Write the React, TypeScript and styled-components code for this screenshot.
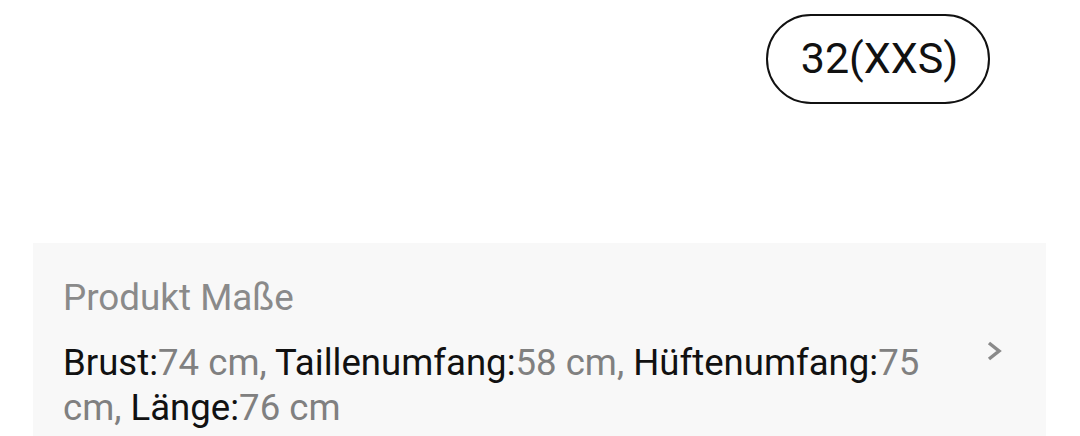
import React from "react";
import styled, { createGlobalStyle } from "styled-components";

const Global = createGlobalStyle`
  html, body { margin: 0; padding: 0; background: #ffffff; }
  body { font-family: Roboto, "Noto Sans", Arial, sans-serif; }
`;

const Page = styled.div`
  width: 1080px;
  height: 436px;
  display: flex;
  flex-direction: column;
  background: #ffffff;
  overflow: hidden;
`;

const SizeRow = styled.div`
  display: flex;
  justify-content: flex-end;
  padding: 14px 90px 0 0;
  height: 243px;
  box-sizing: border-box;
  flex-shrink: 0;
`;

const SizeChip = styled.div`
  width: 224px;
  height: 90px;
  box-sizing: border-box;
  border: 2.5px solid #111111;
  border-radius: 45px;
  display: flex;
  align-items: center;
  justify-content: center;
  font-size: 43px;
  color: #111111;
  padding: 0 0 2px 3px;
`;

const Panel = styled.div`
  margin: 0 34px 0 33px;
  flex: 1;
  background: #f8f8f8;
  display: flex;
  align-items: flex-start;
  padding: 34px 0 0 30px;
`;

const Body = styled.div`
  display: flex;
  flex-direction: column;
  width: 885px;
`;

const Title = styled.div`
  font-size: 36.8px;
  color: #8a8a8a;
  line-height: 42px;
`;

const Specs = styled.div`
  margin-top: 21px;
  font-size: 36.6px;
  line-height: 45px;
  color: #111111;
`;

const Value = styled.span`
  color: #808080;
`;

const Chevron = styled.svg`
  margin: 62px 0 0 38px;
  width: 17px;
  height: 24px;
`;

const specs = [
  ["Brust", "74 cm"],
  ["Taillenumfang", "58 cm"],
  ["Hüftenumfang", "75 cm"],
  ["Länge", "76 cm"],
];

export default function App() {
  return (
    <Page>
      <Global />
      <SizeRow>
        <SizeChip>32(XXS)</SizeChip>
      </SizeRow>
      <Panel>
        <Body>
          <Title>Produkt Maße</Title>
          <Specs>
            {specs.map(([k, v], i) => (
              <React.Fragment key={k}>
                {k}:<Value>{v}{i < specs.length - 1 ? ", " : ""}</Value>
              </React.Fragment>
            ))}
          </Specs>
        </Body>
        <Chevron viewBox="0 0 17 24">
          <path d="M3 4 L13 12 L3 20" fill="none" stroke="#8a8a8a" strokeWidth="3.5" />
        </Chevron>
      </Panel>
    </Page>
  );
}
